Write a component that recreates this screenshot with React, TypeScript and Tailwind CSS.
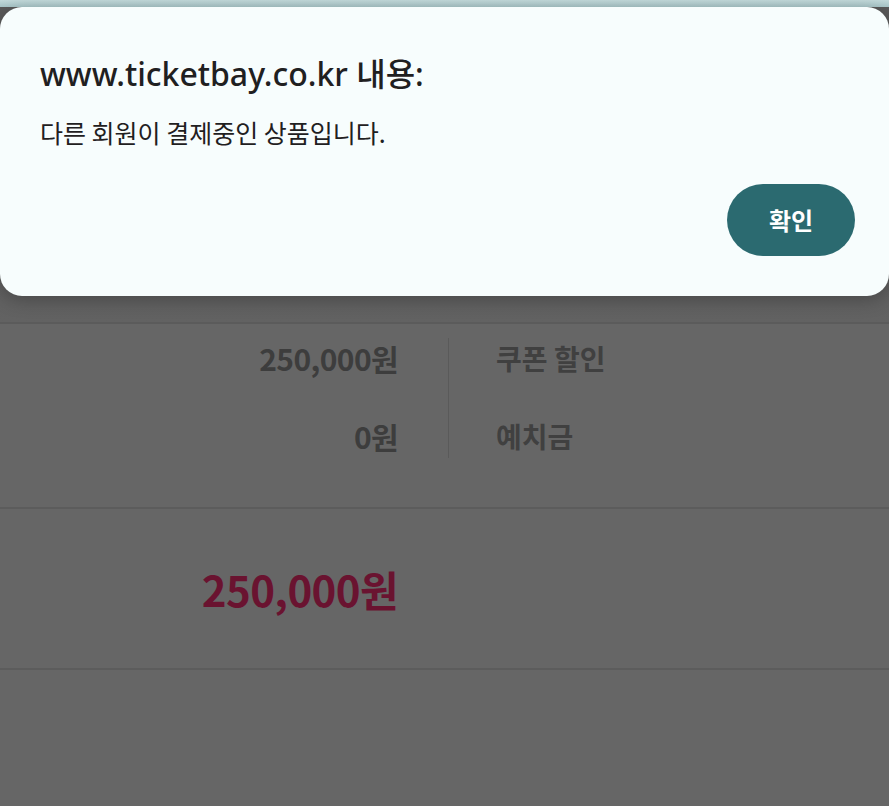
export default function App() {
  const kr = { fontFamily: '"Noto Sans CJK KR", "Noto Sans", sans-serif' }

  return (
    <div className="relative min-h-[806px] w-full overflow-hidden bg-[#666666]" style={kr}>
      {/* Dimmed page behind the alert */}
      <div className="h-[7px] bg-gradient-to-b from-[#c3dadb] to-[#a9c7c9]" />
      <div className="h-[317px] bg-gradient-to-b from-[#5a5a5a] via-[#5a5a5a] to-[#626262] border-b-2 border-[#5b5b5b]" />

      <div className="flex pt-[12px] pb-[16px]">
        <div className="flex w-[448px] flex-col items-end gap-[34px] pr-[50px]">
          <div className="text-[30px] font-bold leading-[44px] tracking-[-0.6px] text-[#3d3d3d]">250,000원</div>
          <div className="text-[30px] font-bold leading-[44px] tracking-[-0.6px] text-[#3d3d3d]">0원</div>
        </div>
        <div className="mt-[2px] w-px h-[120px] bg-[#5a5a5a]" />
        <div className="flex flex-col gap-[34px] pl-[47px]">
          <div className="text-[28px] font-bold leading-[44px] text-[#404040]">쿠폰 할인</div>
          <div className="text-[28px] font-bold leading-[44px] text-[#404040]">예치금</div>
        </div>
      </div>

      <div className="h-[35px] border-b-2 border-[#5c5c5c]" />

      <div className="flex h-[161px] items-center border-b-2 border-[#5c5c5c]">
        <div className="flex w-[398px] justify-end">
          <span className="text-[42px] font-bold leading-none tracking-[-0.6px] text-[#6a1330]">250,000원</span>
        </div>
      </div>

      {/* Alert dialog */}
      <div className="absolute left-0 right-0 top-[7px] h-[289px] rounded-[22px] bg-[#f7fdfd] px-[40px] pt-[47px] shadow-[0_4px_18px_rgba(0,0,0,0.25)]">
        <div
          className="text-[32px] font-medium leading-[40px] text-[#1f2021]"
          style={{ fontFamily: '"Noto Sans", "Noto Sans CJK KR", sans-serif' }}
        >
          www.ticketbay.co.kr 내용:
        </div>
        <div className="mt-[22px] text-[25px] leading-[32px] text-[#1f2021]">
          다른 회원이 결제중인 상품입니다.
        </div>
        <div className="mt-[36px] flex justify-end">
          <button className="mr-[-6px] h-[72px] w-[128px] rounded-full bg-[#2b6a70] text-[24px] font-bold text-white">
            확인
          </button>
        </div>
      </div>
    </div>
  )
}
